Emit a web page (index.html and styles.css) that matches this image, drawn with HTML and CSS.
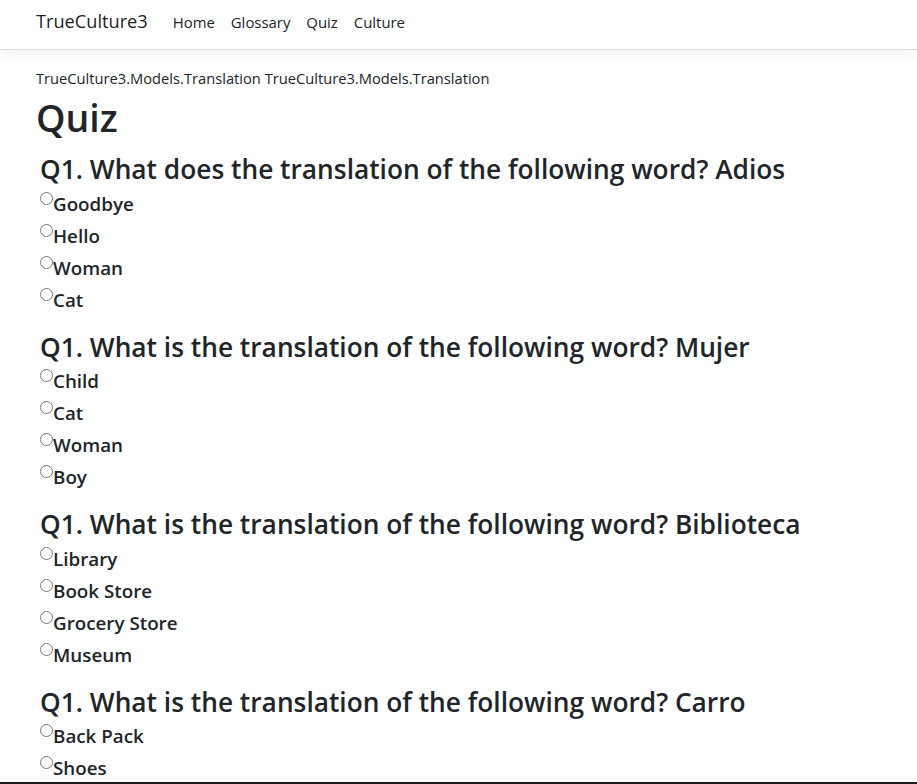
FILE: index.html
```html
<!DOCTYPE html>
<html lang="en">
<head>
<meta charset="utf-8">
<title>Quiz - TrueCulture3</title>
<link rel="stylesheet" href="styles.css">
</head>
<body>
<header class="navbar">
  <a class="brand" href="#">TrueCulture3</a>
  <nav class="nav">
    <a class="nav-link" href="#">Home</a>
    <a class="nav-link" href="#">Glossary</a>
    <a class="nav-link" href="#">Quiz</a>
    <a class="nav-link" href="#">Culture</a>
  </nav>
</header>
<main class="main">
  <p class="models">TrueCulture3.Models.Translation TrueCulture3.Models.Translation</p>
  <h1 class="title">Quiz</h1>
  <form class="quiz">
    <section class="question">
      <h3 class="q-title">Q1. What does the translation of the following word? Adios</h3>
      <label class="option"><input type="radio" name="q1"><span>Goodbye</span></label>
      <label class="option"><input type="radio" name="q1"><span>Hello</span></label>
      <label class="option"><input type="radio" name="q1"><span>Woman</span></label>
      <label class="option"><input type="radio" name="q1"><span>Cat</span></label>
    </section>
    <section class="question">
      <h3 class="q-title">Q1. What is the translation of the following word? Mujer</h3>
      <label class="option"><input type="radio" name="q2"><span>Child</span></label>
      <label class="option"><input type="radio" name="q2"><span>Cat</span></label>
      <label class="option"><input type="radio" name="q2"><span>Woman</span></label>
      <label class="option"><input type="radio" name="q2"><span>Boy</span></label>
    </section>
    <section class="question">
      <h3 class="q-title">Q1. What is the translation of the following word? Biblioteca</h3>
      <label class="option"><input type="radio" name="q3"><span>Library</span></label>
      <label class="option"><input type="radio" name="q3"><span>Book Store</span></label>
      <label class="option"><input type="radio" name="q3"><span>Grocery Store</span></label>
      <label class="option"><input type="radio" name="q3"><span>Museum</span></label>
    </section>
    <section class="question">
      <h3 class="q-title">Q1. What is the translation of the following word? Carro</h3>
      <label class="option"><input type="radio" name="q4"><span>Back Pack</span></label>
      <label class="option"><input type="radio" name="q4"><span>Shoes</span></label>
    </section>
  </form>
</main>
<div class="screen-edge"></div>
</body>
</html>
```

FILE: styles.css
```css
* { box-sizing: border-box; }

html, body {
  height: 784px;
  overflow: hidden;
}

body {
  margin: 0;
  font-family: "Open Sans", "Noto Sans", sans-serif;
  color: #212529;
  background: #fff;
  font-size: 16px;
  line-height: 1.5;
}

a { text-decoration: none; }

.navbar {
  display: flex;
  align-items: center;
  height: 50px;
  padding: 0 36px 5px;
  border-bottom: 1px solid #dedde8;
  box-shadow: 0 4px 12px rgba(0, 0, 0, 0.05);
  background: #fff;
}

.brand {
  font-size: 18.2px;
  color: rgba(0, 0, 0, 0.9);
  margin-right: 17px;
}

.nav {
  display: flex;
}

.nav-link {
  font-size: 14.9px;
  color: #212529;
  padding: 0 8px;
}

.main {
  padding: 16px 36px 0;
}

.models {
  margin: 0;
  font-size: 14.7px;
  line-height: 24px;
}

.title {
  margin: 6px 0 15px;
  font-size: 37.5px;
  line-height: 43px;
  font-weight: 600;
}

.quiz {
  padding-left: 4px;
}

.question {
  display: flex;
  flex-direction: column;
  margin-bottom: 12px;
}

.q-title {
  margin: 0 0 6px;
  font-size: 26.3px;
  line-height: 31.6px;
  font-weight: 600;
}

.option {
  display: flex;
  align-items: flex-start;
  font-size: 18.8px;
  line-height: 24px;
  font-weight: 600;
  margin-bottom: 8px;
}

.option input {
  margin: 0;
  width: 13px;
  height: 13px;
}

.screen-edge {
  position: fixed;
  left: 0;
  right: 0;
  bottom: 0;
  height: 2px;
  background: #1b1b1b;
}
```
